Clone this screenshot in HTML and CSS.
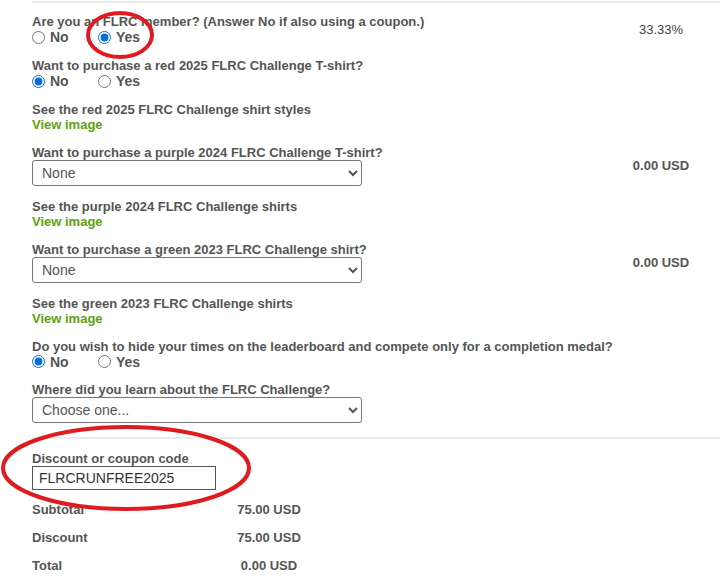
FILE: index.html
```html
<!DOCTYPE html>
<html>
<head>
<meta charset="utf-8">
<link rel="stylesheet" href="styles.css">
</head>
<body>
<div class="page">
  <div class="topline"></div>
  <div class="form">
    <div class="row">
      <div class="field">
        <div class="label">Are you an FLRC member? (Answer No if also using a coupon.)</div>
        <div class="radios">
          <label class="opt"><input type="radio" name="m"> No</label>
          <label class="opt"><input type="radio" name="m" checked> Yes</label>
        </div>
      </div>
      <div class="price normal">33.33%</div>
    </div>
    <div class="row">
      <div class="field">
        <div class="label">Want to purchase a red 2025 FLRC Challenge T-shirt?</div>
        <div class="radios">
          <label class="opt"><input type="radio" name="r" checked> No</label>
          <label class="opt"><input type="radio" name="r"> Yes</label>
        </div>
      </div>
      <div class="price"></div>
    </div>
    <div class="row">
      <div class="field">
        <div class="label">See the red 2025 FLRC Challenge shirt styles</div>
        <a class="link" href="#">View image</a>
      </div>
      <div class="price"></div>
    </div>
    <div class="row">
      <div class="field">
        <div class="label">Want to purchase a purple 2024 FLRC Challenge T-shirt?</div>
        <select class="sel"><option>None</option></select>
      </div>
      <div class="price">0.00 USD</div>
    </div>
    <div class="row">
      <div class="field">
        <div class="label">See the purple 2024 FLRC Challenge shirts</div>
        <a class="link" href="#">View image</a>
      </div>
      <div class="price"></div>
    </div>
    <div class="row">
      <div class="field">
        <div class="label">Want to purchase a green 2023 FLRC Challenge shirt?</div>
        <select class="sel"><option>None</option></select>
      </div>
      <div class="price">0.00 USD</div>
    </div>
    <div class="row">
      <div class="field">
        <div class="label">See the green 2023 FLRC Challenge shirts</div>
        <a class="link" href="#">View image</a>
      </div>
      <div class="price"></div>
    </div>
    <div class="row">
      <div class="field">
        <div class="label">Do you wish to hide your times on the leaderboard and compete only for a completion medal?</div>
        <div class="radios short">
          <label class="opt"><input type="radio" name="h" checked> No</label>
          <label class="opt"><input type="radio" name="h"> Yes</label>
        </div>
      </div>
      <div class="price"></div>
    </div>
    <div class="row">
      <div class="field">
        <div class="label">Where did you learn about the FLRC Challenge?</div>
        <select class="sel"><option>Choose one...</option></select>
      </div>
      <div class="price"></div>
    </div>
  </div>
  <div class="sep"></div>
  <div class="coupon">
    <div class="label">Discount or coupon code</div>
    <input class="code" type="text" value="FLRCRUNFREE2025">
  </div>
  <div class="totals">
    <div class="trow"><span class="tl">Subtotal</span><span class="tv">75.00 USD</span></div>
    <div class="trow"><span class="tl">Discount</span><span class="tv">75.00 USD</span></div>
    <div class="trow"><span class="tl">Total</span><span class="tv">0.00 USD</span></div>
  </div>
  <svg class="marks" width="720" height="577" viewBox="0 0 720 577">
    <ellipse cx="120" cy="35" rx="32" ry="22" fill="none" stroke="#e01b1f" stroke-width="4"/>
    <ellipse cx="126" cy="468" rx="123" ry="41" fill="none" stroke="#e01b1f" stroke-width="4"/>
  </svg>
</div>
</body>
</html>
```
FILE: styles.css
```css
html, body {
  margin: 0;
  padding: 0;
  background: #fff;
}
body {
  font-family: "Liberation Sans", Arial, sans-serif;
  color: #555;
}
.page {
  position: relative;
  width: 720px;
  height: 577px;
  overflow: hidden;
}
.topline {
  margin: 1px 0 0 32px;
  height: 2px;
  background: #ececec;
}
.form {
  padding: 11px 0 1px 32px;
}
.row {
  display: grid;
  grid-template-columns: 1fr 118px;
  align-items: center;
  margin-bottom: 13px;
}
.field {
  display: flex;
  flex-direction: column;
  align-items: flex-start;
}
.label {
  font-size: 13px;
  font-weight: bold;
  line-height: 15px;
  color: #555;
  white-space: nowrap;
}
.radios {
  display: flex;
  height: 16px;
  align-items: center;
}
.radios.short {
  height: 15px;
}
.opt {
  display: flex;
  align-items: center;
  width: 66px;
  font-size: 14px;
  font-weight: bold;
  color: #555;
  line-height: 16px;
}
.opt input {
  margin: 0 5px 0 0;
  width: 13px;
  height: 13px;
  accent-color: #0b6bdc;
}
.link {
  font-size: 13px;
  font-weight: bold;
  line-height: 15px;
  color: #5ea10f;
  text-decoration: none;
}
.sel {
  width: 330px;
  height: 26px;
  font-family: "Liberation Sans", Arial, sans-serif;
  font-size: 14px;
  color: #555;
  border: 1px solid #767676;
  border-radius: 3px;
  background: #fff;
  padding: 0 0 0 5px;
  margin: 0;
}
.price {
  text-align: center;
  font-size: 13px;
  font-weight: bold;
  color: #555;
}
.price.normal {
  font-weight: normal;
  color: #444;
}
.sep {
  margin: 0 0 0 32px;
  height: 2px;
  background: #ececec;
}
.coupon {
  padding: 12px 0 0 32px;
  display: flex;
  flex-direction: column;
  align-items: flex-start;
}
.code {
  box-sizing: border-box;
  width: 184px;
  height: 24px;
  margin: 0;
  border: 1px solid #555;
  border-radius: 0;
  padding: 0 6px;
  font-family: "Liberation Sans", Arial, sans-serif;
  font-size: 14px;
  color: #333;
}
.totals {
  padding: 5px 0 0 32px;
}
.trow {
  display: flex;
  height: 28px;
  align-items: center;
  font-size: 13px;
  font-weight: bold;
  color: #555;
}
.tl {
  width: 178px;
}
.tv {
  width: 118px;
  text-align: center;
}
.marks {
  position: absolute;
  left: 0;
  top: 0;
  pointer-events: none;
}
```
